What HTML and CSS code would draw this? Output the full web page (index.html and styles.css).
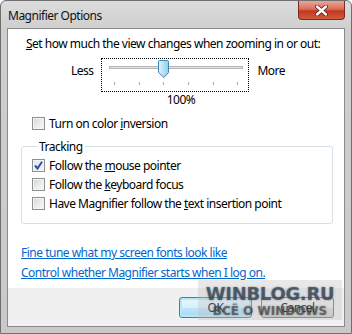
FILE: index.html
```html
<!DOCTYPE html>
<html lang="en">
<head>
    <meta charset="UTF-8">
    <title>Magnifier Options</title>
    <link rel="stylesheet" href="styles.css">
</head>
<body>
    <div class="window">
        <div class="titlebar">
            <span class="title">Magnifier Options</span>
            <div class="close-btn">
                <svg width="13" height="11" viewBox="0 0 13 11">
                    <path d="M2 1.5 L11 9.5 M11 1.5 L2 9.5" stroke="#5a1a12" stroke-width="4" stroke-linecap="round"/>
                    <path d="M2 1.5 L11 9.5 M11 1.5 L2 9.5" stroke="#fff" stroke-width="2.4" stroke-linecap="round"/>
                </svg>
            </div>
        </div>

        <div class="client">
            <div class="content">
                <p class="prompt"><u>S</u>et how much the view changes when zooming in or out:</p>

                <div class="zoom-row">
                    <span class="zoom-label">Less</span>
                    <div class="slider">
                        <svg width="146" height="32" viewBox="0 0 146 32">
                            <defs>
                                <linearGradient id="thumb" x1="0" y1="0" x2="1" y2="0">
                                    <stop offset="0" stop-color="#dff3fb"/>
                                    <stop offset="1" stop-color="#8fd0ee"/>
                                </linearGradient>
                            </defs>
                            <rect x="7.5" y="7.5" width="133" height="2" fill="#e4e4e4" stroke="#b6b6b6"/>
                            <g stroke="#a8a8a8">
                                <line x1="12.5" y1="23" x2="12.5" y2="26"/>
                                <line x1="37.5" y1="23" x2="37.5" y2="26"/>
                                <line x1="61.5" y1="23" x2="61.5" y2="26"/>
                                <line x1="86.5" y1="23" x2="86.5" y2="26"/>
                                <line x1="111.5" y1="23" x2="111.5" y2="26"/>
                                <line x1="135.5" y1="23" x2="135.5" y2="26"/>
                            </g>
                            <path d="M57.5 1.5 H65.5 Q66.5 1.5 66.5 2.5 V13.5 L62 18.5 L56.5 13.5 V2.5 Q56.5 1.5 57.5 1.5 Z" fill="url(#thumb)" stroke="#3f86b7"/>
                        </svg>
                    </div>
                    <span class="zoom-label">More</span>
                </div>
                <div class="percent">100%</div>

                <label class="check"><span class="box"></span><span>Turn on color <u>i</u>nversion</span></label>

                <fieldset class="tracking">
                    <legend>Tracking</legend>
                    <label class="check"><span class="box checked">
                        <svg width="9" height="9" viewBox="0 0 9 9"><path d="M1 4.5 L3.5 7.5 L8 0.8" fill="none" stroke="#2c4f9e" stroke-width="2"/></svg>
                    </span><span>Follow the <u>m</u>ouse pointer</span></label>
                    <label class="check"><span class="box"></span><span>Follow the <u>k</u>eyboard focus</span></label>
                    <label class="check"><span class="box"></span><span>Have Magnifier follow the <u>t</u>ext insertion point</span></label>
                </fieldset>

                <div class="links">
                    <a href="#">Fine tune what my screen fonts look like</a>
                    <a href="#">Control whether Magnifier starts when I log on.</a>
                </div>
            </div>

            <div class="buttons">
                <button class="btn default">OK</button>
                <button class="btn">Cancel</button>
            </div>

            <!-- watermark from the source picture -->
            <div class="watermark">
                <div class="wm-big">WINBLOG.RU</div>
                <div class="wm-small">ВСЁ О WINDOWS</div>
            </div>
        </div>
    </div>
</body>
</html>
```

FILE: styles.css
```css
body {
    margin: 0;
    font-family: "Noto Sans", "Open Sans", sans-serif;
    font-size: 12px;
    letter-spacing: -0.5px;
    color: #000;
    background: #fff;
}

.window {
    width: 352px;
    height: 334px;
    box-sizing: border-box;
    padding: 0 6px 6px 6px;
    border: 1px solid #6f6f6f;
    border-radius: 6px 6px 0 0;
    background: linear-gradient(to bottom, #dcdcdc 0, #cfcfcf 28px, #c9c9c9 100%);
    display: flex;
    flex-direction: column;
}

.titlebar {
    height: 27px;
    display: flex;
    justify-content: space-between;
    align-items: flex-start;
}

.titlebar .title {
    margin-top: 6px;
    margin-left: 1px;
    color: #111;
}

.close-btn {
    width: 45px;
    height: 18px;
    border: 1px solid #7a2a20;
    border-top: none;
    border-radius: 0 0 4px 4px;
    background: linear-gradient(to bottom, #e8a796 0, #d7705c 45%, #c2381f 55%, #d05a3e 100%);
    display: flex;
    justify-content: center;
    align-items: center;
}

.client {
    position: relative;
    flex: 1;
    border: 1px solid #8a8a8a;
    background: #fff;
    display: flex;
    flex-direction: column;
}

.content {
    flex: 1;
    padding: 0 11px 0 13px;
}

.prompt {
    margin: 7px 0 0 5px;
    line-height: 15px;
}

.zoom-row {
    margin-top: 7px;
    display: flex;
    justify-content: center;
    align-items: flex-start;
    gap: 8px;
    padding-left: 2px;
}

.zoom-label {
    margin-top: 5px;
    line-height: 15px;
}

.slider {
    width: 146px;
    height: 32px;
    border: 1px dotted #000;
}

.slider svg {
    display: block;
}

.percent {
    text-align: center;
    padding-left: 8px;
    line-height: 15px;
}

.check {
    display: flex;
    align-items: center;
    height: 19px;
    gap: 4px;
}

.content > .check {
    margin-top: 6px;
    padding-left: 11px;
    height: 20px;
}

.box {
    width: 11px;
    height: 11px;
    border: 1px solid #8e8f8f;
    background: linear-gradient(135deg, #d2d4d8 0, #eceef0 60%, #f7f7f7 100%);
    box-shadow: inset 0 0 0 1px #f4f4f4;
    display: flex;
    justify-content: center;
    align-items: center;
}

.box.checked {
    background: linear-gradient(135deg, #dfe6f2 0, #f4f6fa 100%);
}

.tracking {
    margin: 6px 0 0 0;
    padding: 2px 10px 10px 10px;
    border: 1px solid #d5dfe5;
    border-radius: 3px;
    box-shadow: 1px 1px 0 #fff;
}

.tracking legend {
    padding: 0 2px;
    margin-left: 5px;
    line-height: 15px;
}

.links {
    margin-top: 19px;
    display: flex;
    flex-direction: column;
}

.links a {
    color: #0066cc;
    line-height: 20px;
}

.buttons {
    height: 38px;
    box-sizing: border-box;
    background: #f0f0f0;
    display: flex;
    justify-content: flex-end;
    align-items: flex-start;
    padding: 9px 10px 0 0;
    gap: 9px;
}

.btn {
    width: 73px;
    height: 21px;
    font-family: inherit;
    font-size: 12px;
    letter-spacing: inherit;
    border: 1px solid #707070;
    border-radius: 3px;
    background: linear-gradient(to bottom, #f2f2f2 0, #ebebeb 50%, #dddddd 51%, #cfcfcf 100%);
    padding: 0;
}

.btn.default {
    border-color: #3c7fb1;
    background: linear-gradient(to bottom, #eaf6fd 0, #d9f0fc 50%, #bee6fd 51%, #a7d9f5 100%);
    box-shadow: inset 0 0 0 2px #b6e8f9;
}

.watermark {
    position: absolute;
    left: 190px;
    top: 251px;
    width: 144px;
    height: 40px;
    background: rgba(190, 190, 190, 0.35);
    font-family: "DejaVu Sans", sans-serif;
    font-weight: bold;
    letter-spacing: 0;
    text-align: center;
}

.wm-big {
    font-size: 18px;
    line-height: 21px;
    margin-top: 3px;
    color: rgba(55, 70, 85, 0.75);
    text-shadow: 0 0 2px rgba(55, 70, 85, 0.6);
    letter-spacing: -0.3px;
}

.wm-small {
    font-size: 12px;
    line-height: 14px;
    color: rgba(60, 60, 60, 0.6);
    text-shadow: 0 0 2px rgba(60, 60, 60, 0.5);
}
```
